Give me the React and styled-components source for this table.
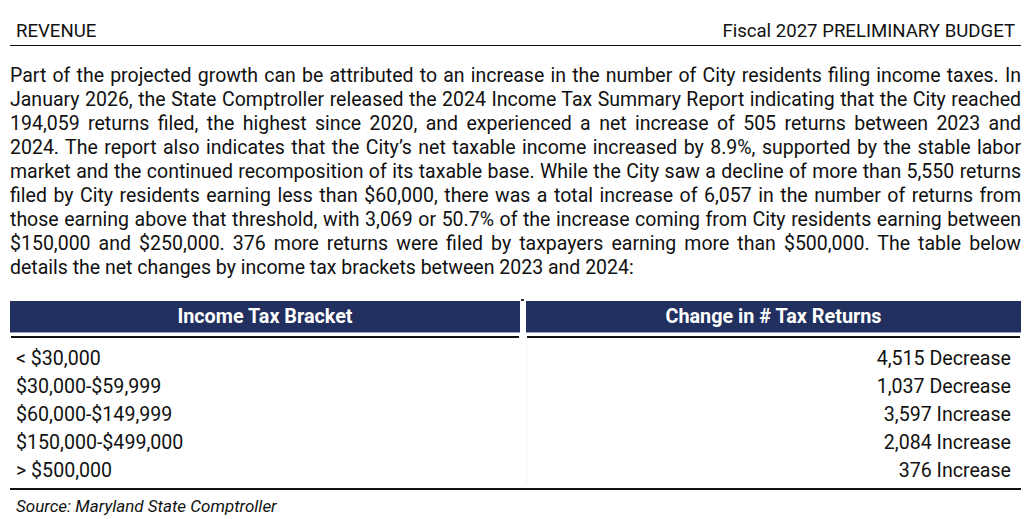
import React from "react";
import styled, { createGlobalStyle } from "styled-components";

const Global = createGlobalStyle`
  html, body { margin: 0; padding: 0; background: #fff; }
  body { font-family: Roboto, "Liberation Sans", Arial, sans-serif; color: #111; }
`;

const Page = styled.div`
  width: 1011px;
  padding: 0 15px 0 10px;
`;

const Header = styled.header`
  display: flex;
  justify-content: space-between;
  align-items: flex-end;
  padding: 21px 6px 4px 6px;
  border-bottom: 1px solid #111;
  font-size: 18.6px;
  line-height: 20px;
`;

const Paragraph = styled.div`
  margin: 18px 0 0 0;
  font-size: 19.5px;
  line-height: 24px;
`;

const Line = styled.span`
  display: block;
  white-space: nowrap;
  text-align: ${(p) => (p.$last ? "left" : "justify")};
  text-align-last: ${(p) => (p.$last ? "left" : "justify")};
`;

const Table = styled.div`
  margin-top: 21px;
  display: grid;
  grid-template-columns: 510px 495px;
  column-gap: 6px;
`;

const HeadCell = styled.div`
  position: relative;
  height: 31px;
  background: #21305f;
  color: #fff;
  font-weight: 700;
  font-size: 19.8px;
  display: flex;
  align-items: center;
  justify-content: center;
  border-bottom: 1px solid #9aa5c4;
  box-shadow: 0 4px 0 -1px #fff, 0 6px 0 -1px #111;
  margin-bottom: 6px;
`;

const DividerCap = styled.span`
  position: absolute;
  top: -2px;
  right: -4px;
  width: 3px;
  height: 2px;
  background: #333;
`;

const Cell = styled.div`
  height: 28px;
  display: flex;
  align-items: center;
  font-size: 19.6px;
  padding: 0 ${(p) => (p.$right ? "10px" : "6px")};
  justify-content: ${(p) => (p.$right ? "flex-end" : "flex-start")};
  border-left: ${(p) => (p.$right ? "1px solid #f3f3f3" : "none")};
  ${(p) => p.$first && "margin-top: 5px;"}
`;

const BottomRule = styled.div`
  grid-column: 1 / -1;
  margin-top: 4px;
  height: 2px;
  background: #111;
`;

const Source = styled.div`
  font-style: italic;
  font-size: 17px;
  line-height: 20px;
  padding: 6px 6px 0 6px;
`;

const lines = [
  "Part of the projected growth can be attributed to an increase in the number of City residents filing income taxes. In",
  "January 2026, the State Comptroller released the 2024 Income Tax Summary Report indicating that the City reached",
  "194,059 returns filed, the highest since 2020, and experienced a net increase of 505 returns between 2023 and",
  "2024. The report also indicates that the City’s net taxable income increased by 8.9%, supported by the stable labor",
  "market and the continued recomposition of its taxable base. While the City saw a decline of more than 5,550 returns",
  "filed by City residents earning less than $60,000, there was a total increase of 6,057 in the number of returns from",
  "those earning above that threshold, with 3,069 or 50.7% of the increase coming from City residents earning between",
  "$150,000 and $250,000. 376 more returns were filed by taxpayers earning more than $500,000. The table below",
  "details the net changes by income tax brackets between 2023 and 2024:",
];

const rows = [
  ["< $30,000", "4,515 Decrease"],
  ["$30,000-$59,999", "1,037 Decrease"],
  ["$60,000-$149,999", "3,597 Increase"],
  ["$150,000-$499,000", "2,084 Increase"],
  ["> $500,000", "376 Increase"],
];

export default function App() {
  return (
    <>
      <Global />
      <Page>
        <Header>
          <span>REVENUE</span>
          <span>Fiscal 2027 PRELIMINARY BUDGET</span>
        </Header>
        <Paragraph>
          {lines.map((l, i) => (
            <Line key={i} $last={i === lines.length - 1}>
              {l}
            </Line>
          ))}
        </Paragraph>
        <Table>
          <HeadCell>
            Income Tax Bracket
            <DividerCap />
          </HeadCell>
          <HeadCell>Change in # Tax Returns</HeadCell>
          {rows.map(([a, b], i) => (
            <React.Fragment key={a}>
              <Cell $first={i === 0}>{a}</Cell>
              <Cell $right $first={i === 0}>{b}</Cell>
            </React.Fragment>
          ))}
          <BottomRule />
        </Table>
        <Source>Source: Maryland State Comptroller</Source>
      </Page>
    </>
  );
}
